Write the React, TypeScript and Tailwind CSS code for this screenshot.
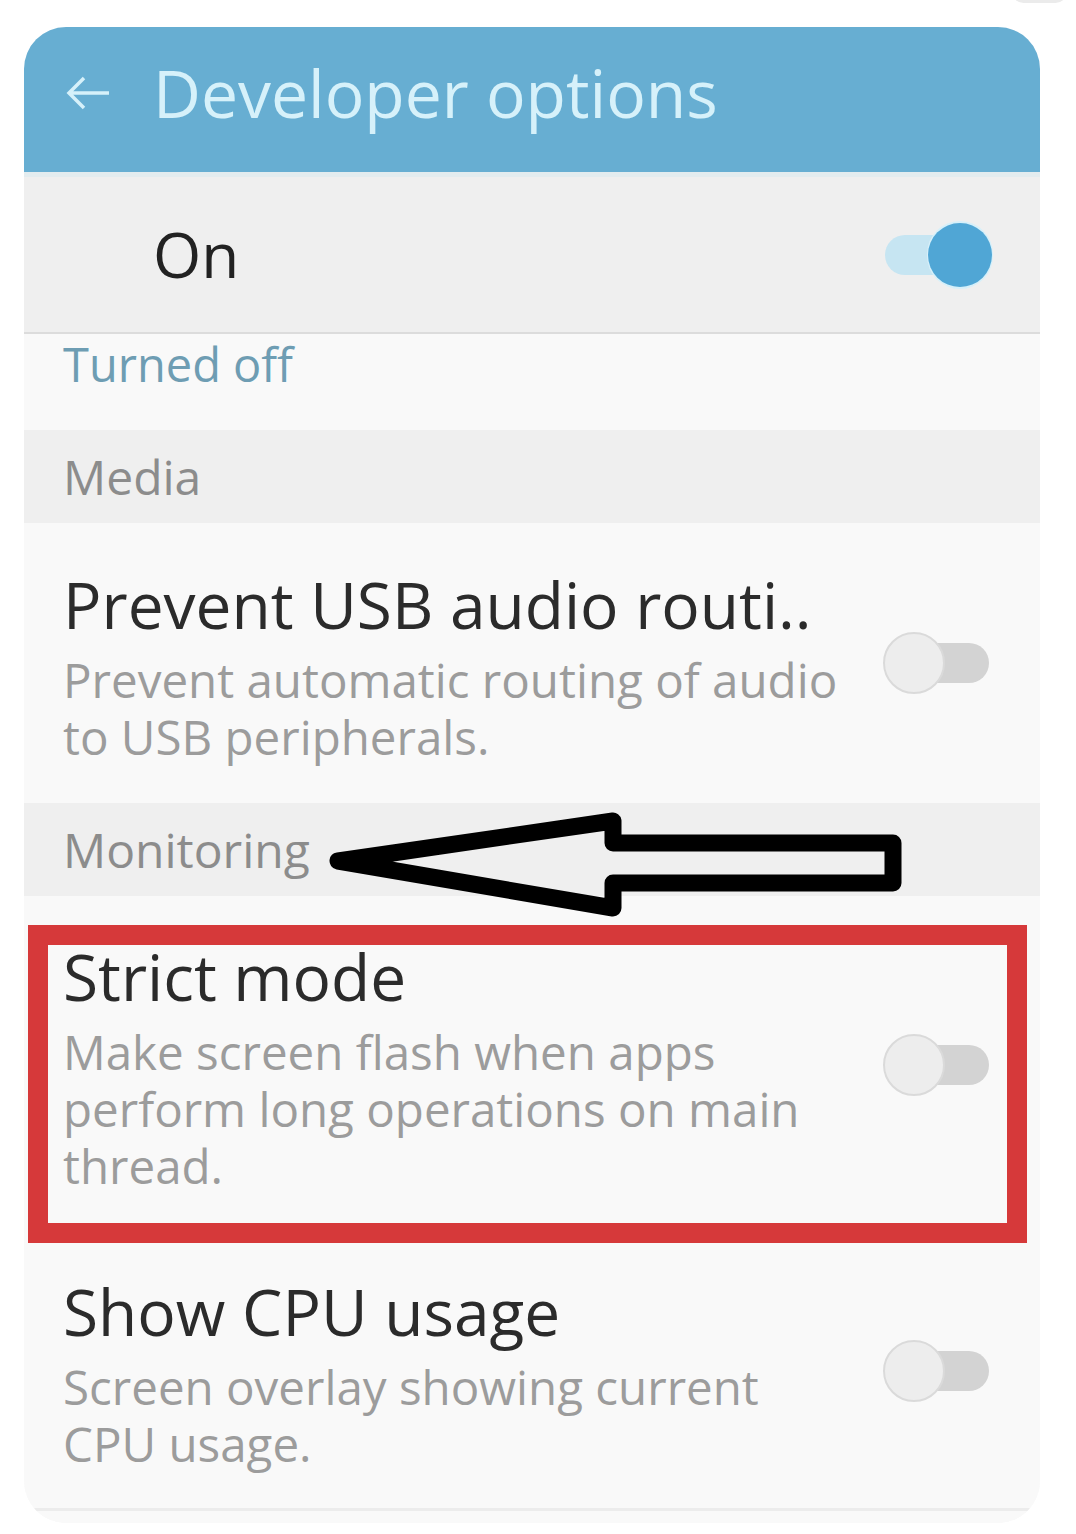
import React from 'react';

type Item = {
  title: string;
  lines: string[];
};

const font = { fontFamily: '"Open Sans", "Noto Sans", sans-serif' };

const Toggle: React.FC<{ on?: boolean }> = ({ on }) => {
  if (on) {
    return (
      <div className="w-[110px] h-[68px] shrink-0 flex items-center">
        <div className="w-[80px] h-[40px] ml-[2px] rounded-full bg-[#c6e5f2]" />
        <div className="-ml-[36px] w-[68px] h-[68px] rounded-full bg-[#d6f0fa] flex items-center justify-center">
          <div className="w-[64px] h-[64px] rounded-full bg-[#50a6d5]" />
        </div>
      </div>
    );
  }
  return (
    <div className="w-[110px] h-[68px] shrink-0 flex items-center">
      <div className="relative z-10 w-[62px] h-[62px] rounded-full bg-[#ededed] border-2 border-[#dadada]" />
      <div className="-ml-[38px] w-[82px] h-[40px] rounded-full bg-[#d3d3d3]" />
    </div>
  );
};

const SectionHeader: React.FC<{ label: string; children?: React.ReactNode }> = ({ label, children }) => (
  <div className="relative h-[93px] flex items-center pl-[39px] bg-[#efefef] text-[48px] text-[#8c8c8c] leading-[1.2]">
    {label}
    {children}
  </div>
);

const SettingRow: React.FC<{ item: Item; height: string; pad: string; children?: React.ReactNode }> = ({
  item,
  height,
  pad,
  children,
}) => (
  <div className={`relative flex items-center justify-between bg-[#f9f9f9] pl-[39px] pr-[47px] ${height}`}>
    <div className={`self-start ${pad}`}>
      <div className="text-[64px] leading-[77px] text-[#2b2b2b]">{item.title}</div>
      <div className="mt-[8px] text-[47.5px] leading-[57px] text-[#9c9c9c]">
        {item.lines.map((l) => (
          <div key={l}>{l}</div>
        ))}
      </div>
    </div>
    <Toggle />
    {children}
  </div>
);

const App: React.FC = () => {
  return (
    <div className="relative w-[1076px] min-h-[1534px] bg-white pt-[27px] overflow-hidden" style={font}>
      {/* bit of the next card peeking in */}
      <div className="absolute -top-[20px] right-[9px] w-[55px] h-[23px] rounded-full bg-[#ebebeb]" />

      <div className="ml-[24px] w-[1016px] rounded-[42px] overflow-hidden bg-[#f9f9f9]">
        {/* Header */}
        <div className="h-[145px] bg-[#67aed2] flex items-center pb-[14px] text-[#d6f1fa]">
          <svg width="46" height="36" viewBox="0 0 46 36" className="ml-[41px]">
            <path d="M44 18H4M19 3L4 18l15 15" fill="none" stroke="#d6f1fa" strokeWidth="3.5" />
          </svg>
          <span className="ml-[42px] text-[66px] leading-[1.2]">Developer options</span>
        </div>

        {/* Master switch */}
        <div className="h-[160px] border-t-[5px] border-[#e3ecef] bg-[#efefef] flex items-center justify-between pl-[129px] pr-[47px]">
          <span className="text-[62px] leading-[1.2] text-[#222]">On</span>
          <Toggle on />
        </div>
        <div className="h-[2px] bg-[#dcdcdc]" />

        <div className="h-[96px] pt-[2px] pl-[39px] bg-[#f9f9f9] text-[47px] leading-[1.2] text-[#6e9db3]">Turned off</div>

        <SectionHeader label="Media" />

        <SettingRow
          item={{ title: 'Prevent USB audio routi..', lines: ['Prevent automatic routing of audio', 'to USB peripherals.'] }}
          height="h-[280px]"
          pad="pt-[43px]"
        />

        <SectionHeader label="Monitoring">
          {/* annotation arrow */}
          <svg
            className="absolute left-[296px] top-0 z-10"
            width="600"
            height="125"
            viewBox="320 800 600 125"
          >
            <path
              d="M338 858L613 818V840H893V880H613V905Z"
              fill="none"
              stroke="#000"
              strokeWidth="17"
              strokeLinejoin="round"
            />
          </svg>
        </SectionHeader>

        <SettingRow
          item={{
            title: 'Strict mode',
            lines: ['Make screen flash when apps', 'perform long operations on main', 'thread.'],
          }}
          height="h-[337px]"
          pad="pt-[42px]"
        >
          {/* annotation box */}
          <div className="absolute left-[4px] top-[29px] w-[999px] h-[318px] border-[20px] border-[#d6393a] z-10 pointer-events-none" />
        </SettingRow>

        <SettingRow
          item={{ title: 'Show CPU usage', lines: ['Screen overlay showing current', 'CPU usage.'] }}
          height="h-[275px]"
          pad="pt-[40px]"
        />

        <div className="h-[3px] bg-[#ececec]" />
        <div className="h-[12px] bg-[#f9f9f9]" />
      </div>
    </div>
  );
};

export default App;
